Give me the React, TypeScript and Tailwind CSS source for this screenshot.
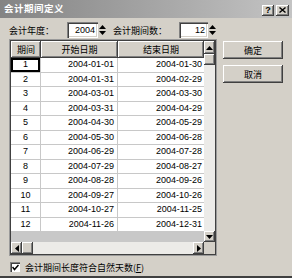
import React from "react";

const rows: [string, string, string][] = [
  ["1", "2004-01-01", "2004-01-30"],
  ["2", "2004-01-31", "2004-02-29"],
  ["3", "2004-03-01", "2004-03-30"],
  ["4", "2004-03-31", "2004-04-29"],
  ["5", "2004-04-30", "2004-05-29"],
  ["6", "2004-05-30", "2004-06-28"],
  ["7", "2004-06-29", "2004-07-28"],
  ["8", "2004-07-29", "2004-08-27"],
  ["9", "2004-08-28", "2004-09-26"],
  ["10", "2004-09-27", "2004-10-26"],
  ["11", "2004-10-27", "2004-11-25"],
  ["12", "2004-11-26", "2004-12-31"],
];

const raised =
  "bg-[#d4d0c8] shadow-[inset_-1px_-1px_0_#404040,inset_1px_1px_0_#ffffff,inset_-2px_-2px_0_#808080]";

function Tri({ dir }: { dir: "up" | "down" | "left" | "right" }) {
  const pts =
    dir === "up"
      ? "0,4 7,4 3.5,0"
      : dir === "down"
      ? "0,0 7,0 3.5,4"
      : dir === "left"
      ? "4,0 4,7 0,3.5"
      : "0,0 0,7 4,3.5";
  const w = dir === "up" || dir === "down" ? 7 : 4;
  const h = dir === "up" || dir === "down" ? 4 : 7;
  return (
    <svg width={w} height={h} viewBox={`0 0 ${w} ${h}`}>
      <polygon points={pts} fill="#000" />
    </svg>
  );
}

function Spinner() {
  return (
    <div className="w-[8px] h-[15px] flex flex-col items-center justify-center gap-[2px]">
      <Tri dir="up" />
      <Tri dir="down" />
    </div>
  );
}

function Input({ value, w }: { value: string; w: string }) {
  return (
    <div
      className={`${w} h-[16px] bg-white flex items-center justify-end pr-[3px] shadow-[inset_1px_1px_0_#808080,inset_2px_2px_0_#404040,inset_-1px_-1px_0_#ffffff,inset_-2px_-2px_0_#d4d0c8] font-['Liberation_Sans',sans-serif] text-[9px]`}
    >
      {value}
    </div>
  );
}

function ScrollBtn({ dir, cls }: { dir: "up" | "down" | "left" | "right"; cls: string }) {
  return (
    <div className={`${cls} ${raised} flex items-center justify-center shrink-0`}>
      <Tri dir={dir} />
    </div>
  );
}

export default function App() {
  return (
    <div className="w-[292px] h-[278px] bg-[#d4d0c8] flex flex-col overflow-hidden text-black font-['Noto_Sans_CJK_SC',sans-serif] border-b-2 border-[#404040]">
      {/* title bar */}
      <div className="h-[18px] shrink-0 flex items-center justify-between pl-[4px] pr-[3px] bg-gradient-to-r from-[#848484] to-[#c4c4c4]">
        <span className="text-white text-[9.5px] font-bold leading-none tracking-[0.5px]">会计期间定义</span>
        <div className="flex gap-[2px] mt-[2px]">
          <div className={`${raised} w-[12px] h-[11px] flex items-center justify-center text-[9px] font-bold leading-none font-['Liberation_Sans',sans-serif]`}>?</div>
          <div className={`${raised} w-[13px] h-[11px] flex items-center justify-center`}>
            <svg width="7" height="6" viewBox="0 0 7 6">
              <path d="M0.5 0.5 L6.5 5.5 M6.5 0.5 L0.5 5.5" stroke="#000" strokeWidth="1.4" />
            </svg>
          </div>
        </div>
      </div>

      {/* body */}
      <div className="flex pl-[9px] pt-[4px]">
        <div className="w-[208px] flex flex-col">
          {/* top row */}
          <div className="h-[16px] flex items-center text-[9px] leading-none whitespace-nowrap">
            <span className="w-[58px]">会计年度：</span>
            <Input value="2004" w="w-[31px]" />
            <Spinner />
            <span className="ml-[7px] w-[66px]">会计期间数：</span>
            <Input value="12" w="w-[29px]" />
            <Spinner />
          </div>

          {/* grid */}
          <div className="mt-[1px] h-[217px] border border-[#9a9a9a] flex flex-col">
            <div className="flex-1 border border-[#404040] flex flex-col bg-[#d4d0c8]">
              <div className="flex h-[201px]">
                {/* table */}
                <div className="w-[193px] flex flex-col">
                  <div className="flex h-[17px] text-[9px] leading-none">
                    <div className={`w-[30px] ${raised} flex items-center justify-center`}>期间</div>
                    <div className={`w-[77px] ${raised} flex items-center justify-center`}>开始日期</div>
                    <div className={`w-[86px] ${raised} flex items-center justify-center`}>结束日期</div>
                  </div>
                  {rows.map((r, i) => (
                    <div key={i} className="flex h-[14.5px] bg-white font-['Liberation_Sans',sans-serif] text-[9px] leading-none">
                      <div
                        className={`w-[30px] border-r border-b border-[#c8c8c8] flex items-center justify-center ${
                          i === 0 ? "shadow-[inset_0_0_0_2px_#000]" : ""
                        }`}
                      >
                        {r[0]}
                      </div>
                      <div className="w-[77px] border-r border-b border-[#c8c8c8] flex items-center justify-end pr-[3px]">
                        {r[1]}
                      </div>
                      <div className="w-[86px] border-b border-[#c8c8c8] flex items-center justify-end pr-[2px]">
                        {r[2]}
                      </div>
                    </div>
                  ))}
                  <div className="flex-1 bg-[#c8c8c8]" />
                </div>
                {/* vertical scrollbar */}
                <div className="w-[11px] flex flex-col bg-[#ecebe8]">
                  <ScrollBtn dir="up" cls="h-[13px]" />
                  <div className={`h-[11px] ${raised}`} />
                  <div className="flex-1" />
                  <ScrollBtn dir="down" cls="h-[11px]" />
                </div>
              </div>
              {/* horizontal scrollbar */}
              <div className="flex h-[12px]">
                <div className="w-[193px] flex bg-[#ecebe8]">
                  <ScrollBtn dir="left" cls="w-[11px]" />
                  <div className={`w-[11px] ${raised}`} />
                  <div className="flex-1" />
                  <ScrollBtn dir="right" cls="w-[11px]" />
                </div>
                <div className="w-[11px] bg-[#d4d0c8]" />
              </div>
            </div>
          </div>

          {/* checkbox row */}
          <div className="mt-[6px] flex items-center text-[9px] leading-none whitespace-nowrap">
            <div className="ml-[1px] w-[10px] h-[10px] bg-white shadow-[inset_1px_1px_0_#808080,inset_2px_2px_0_#404040,inset_-1px_-1px_0_#ffffff] flex items-center justify-center">
              <svg width="7" height="7" viewBox="0 0 7 7">
                <path d="M0.5 3 L2.5 5.5 L6.5 1" stroke="#000" strokeWidth="1.5" fill="none" />
              </svg>
            </div>
            <span className="ml-[5px]">
              会计期间长度符合自然天数(<span className="underline">F</span>)
            </span>
          </div>
        </div>

        {/* buttons */}
        <div className="ml-[6px] mt-[19px] flex flex-col gap-[6px]">
          <div className={`${raised} w-[60px] h-[18px] flex items-center justify-center text-[9px] leading-none`}>确定</div>
          <div className={`${raised} w-[60px] h-[18px] flex items-center justify-center text-[9px] leading-none`}>取消</div>
        </div>
      </div>
    </div>
  );
}
